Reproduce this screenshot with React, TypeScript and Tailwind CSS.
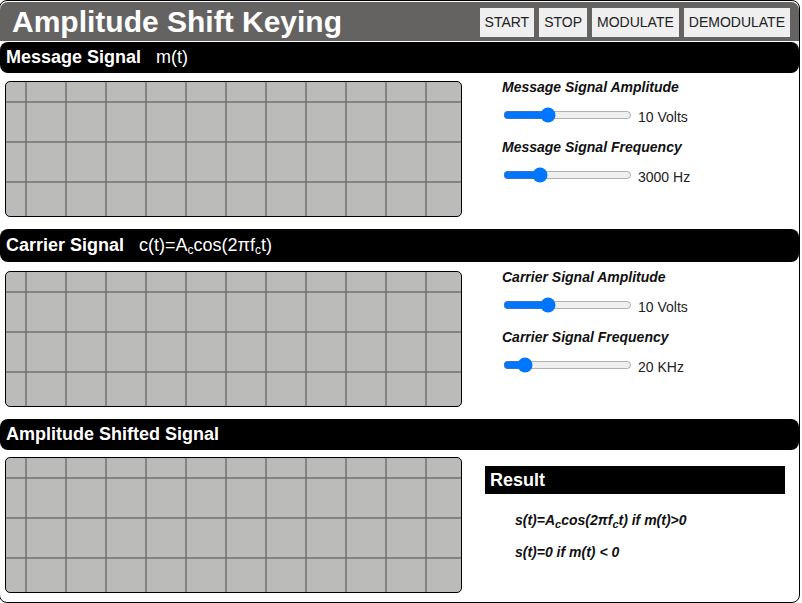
import React from "react";

type Control = { label: string; value: number; unit: string };

function Grid() {
  const xs = Array.from({ length: 11 }, (_, i) => 20 + i * 40);
  const ys = [20, 60, 100];
  return (
    <div className="w-[457px] h-[136px] shrink-0 border border-black rounded-[5px] bg-[#bbbcb9] overflow-hidden">
      <svg width="455" height="134" className="block">
        {xs.map((x) => (
          <line key={"v" + x} x1={x} y1={0} x2={x} y2={134} stroke="#707070" strokeWidth="1.5" />
        ))}
        {ys.map((y) => (
          <line key={"h" + y} x1={0} y1={y} x2={455} y2={y} stroke="#707070" strokeWidth="1.5" />
        ))}
      </svg>
    </div>
  );
}

function Controls({ items }: { items: Control[] }) {
  return (
    <div className="ml-[40px] -mt-[2px] flex flex-col">
      {items.map((c, i) => (
        <div key={i} className={i > 0 ? "mt-[14px]" : ""}>
          <div className="text-[14px] font-bold italic leading-[16px] text-[#111]">{c.label}</div>
          <div className="flex items-center mt-[9px]">
            <input
              type="range"
              min={0}
              max={100}
              defaultValue={c.value}
              className="w-[129px] h-[16px] ml-px accent-[#0075ff]"
            />
            <span className="ml-[6px] translate-y-[3px] text-[14px] text-[#222]">{c.unit}</span>
          </div>
        </div>
      ))}
    </div>
  );
}

function SectionBar({ children, h = "h-[31px]" }: { children: React.ReactNode; h?: string }) {
  return (
    <div className={`${h} bg-black rounded-lg flex items-center px-[6px] text-white text-[18px]`}>
      {children}
    </div>
  );
}

export default function App() {
  const buttons = ["START", "STOP", "MODULATE", "DEMODULATE"];

  return (
    <div
      className="w-[802px] h-[603px] bg-white overflow-hidden"
      style={{ fontFamily: '"Liberation Sans", Arial, sans-serif' }}
    >
      <div className="w-[801px] h-[603px] -ml-px border border-black rounded-lg flex flex-col">
        {/* Header */}
        <div className="mt-px h-[39px] bg-[#656262] rounded-t-lg flex items-center justify-between pl-[12px] pr-[9px]">
          <h1 className="text-white font-bold text-[30px] leading-none">Amplitude Shift Keying</h1>
          <div className="flex gap-[5px] mt-[1px]">
            {buttons.map((b) => (
              <button key={b} className="h-[29px] px-[5px] bg-[#efefef] text-[14px] text-[#222]">
                {b}
              </button>
            ))}
          </div>
        </div>

        {/* Message */}
        <div className="mt-px">
          <SectionBar>
            <span className="font-bold">Message Signal</span>
            <span className="ml-[15px]">m(t)</span>
          </SectionBar>
        </div>
        <div className="flex mt-[8px] ml-[5px]">
          <Grid />
          <Controls
            items={[
              { label: "Message Signal Amplitude", value: 33, unit: "10 Volts" },
              { label: "Message Signal Frequency", value: 26, unit: "3000 Hz" },
            ]}
          />
        </div>

        {/* Carrier */}
        <div className="mt-[12px]">
          <SectionBar h="h-[33px]">
            <span className="font-bold">Carrier Signal</span>
            <span className="ml-[15px]">
              c(t)=A<sub className="text-[12px]">c</sub>cos(2πf<sub className="text-[12px]">c</sub>t)
            </span>
          </SectionBar>
        </div>
        <div className="flex mt-[9px] ml-[5px]">
          <Grid />
          <Controls
            items={[
              { label: "Carrier Signal Amplitude", value: 33, unit: "10 Volts" },
              { label: "Carrier Signal Frequency", value: 12, unit: "20 KHz" },
            ]}
          />
        </div>

        {/* Amplitude shifted */}
        <div className="mt-[12px]">
          <SectionBar>
            <span className="font-bold">Amplitude Shifted Signal</span>
          </SectionBar>
        </div>
        <div className="flex mt-[7px] ml-[5px]">
          <Grid />
          <div className="ml-[23px] mt-[9px] flex flex-col">
            <div className="w-[300px] h-[28px] bg-black flex items-center px-[5px] text-white font-bold text-[18px]">
              Result
            </div>
            <div className="ml-[30px] mt-[16px] text-[14px] font-bold italic text-[#111]">
              s(t)=A<sub className="text-[11px]">c</sub>cos(2πf<sub className="text-[11px]">c</sub>t) if m(t)&gt;0
            </div>
            <div className="ml-[30px] mt-[11px] text-[14px] font-bold italic text-[#111]">
              s(t)=0 if m(t) &lt; 0
            </div>
          </div>
        </div>
      </div>
    </div>
  );
}
